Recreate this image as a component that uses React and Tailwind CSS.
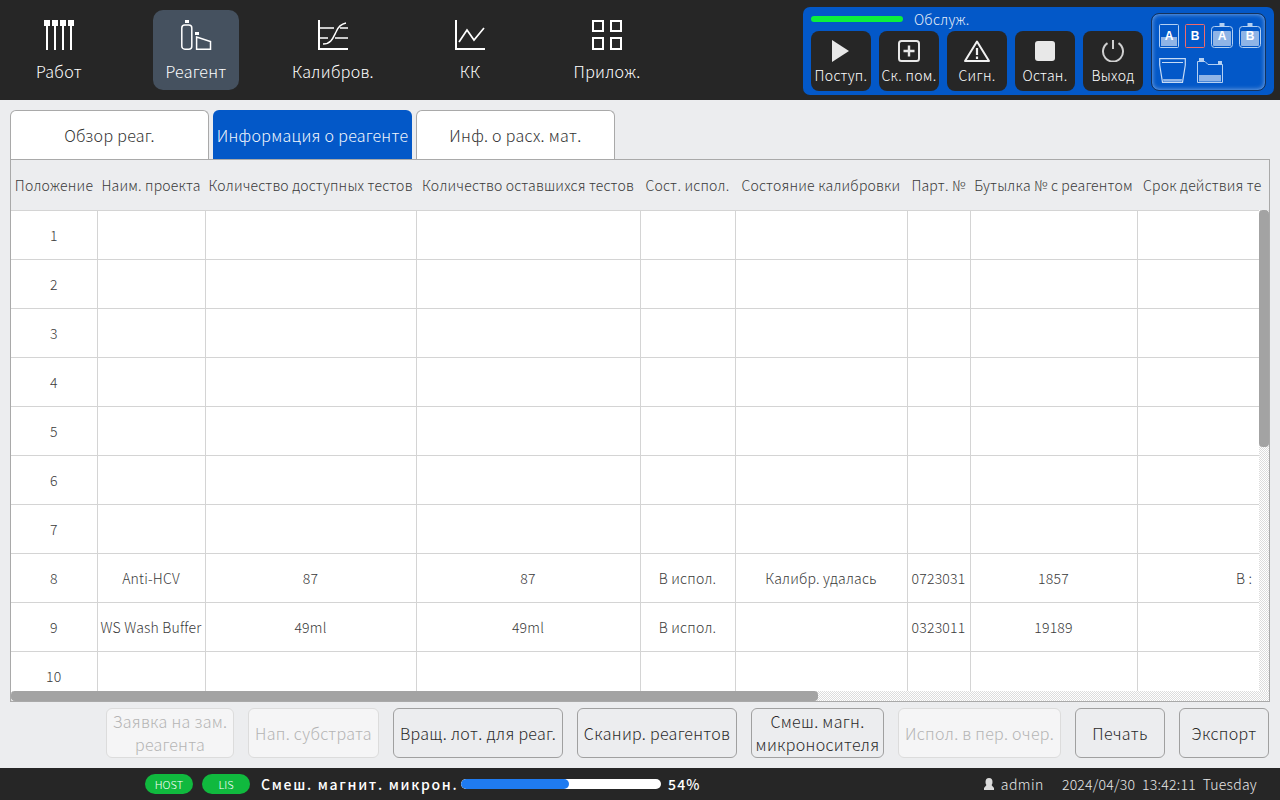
import React from "react";

const FONT = "font-['Noto_Sans_CJK_SC','Noto_Sans',sans-serif]";

const WorkIcon = () => (
  <svg width="30" height="30" viewBox="0 0 30 30" fill="#fff">
    {[0, 8, 16, 24].map((x) => (
      <g key={x}>
        <rect x={x} y="0" width="6" height="6" />
        <rect x={x + 2} y="6" width="2" height="24" />
      </g>
    ))}
  </svg>
);

const ReagentIcon = () => (
  <svg width="32" height="30" viewBox="0 0 32 30" fill="none" stroke="#fff" strokeWidth="1.5">
    <rect x="5" y="0" width="4" height="3" fill="#fff" stroke="none" />
    <rect x="1.8" y="5" width="10" height="24.2" rx="3" />
    <rect x="15" y="12" width="4" height="3" fill="#fff" stroke="none" />
    <path d="M16.6 17 L30.5 21.5 V29.2 H16.6 Z" />
  </svg>
);

const CalibIcon = () => (
  <svg width="30" height="30" viewBox="0 0 30 30" fill="none" stroke="#fff" strokeWidth="1.5">
    <path d="M1 0 V29 H30" strokeWidth="2" />
    <path d="M1 8 H16 M22 8 H30 M1 18 H10 M17 18 H30" />
    <path d="M5 24 C13 24 15 18 18 12 C20 7 23 4 28 3" />
  </svg>
);

const QcIcon = () => (
  <svg width="30" height="30" viewBox="0 0 30 30" fill="none" stroke="#fff">
    <path d="M1 0 V29 H30" strokeWidth="2" />
    <path d="M4 22 L12 10 L19 20 L29 8" strokeWidth="1.7" />
  </svg>
);

const AppsIcon = () => (
  <svg width="30" height="30" viewBox="0 0 30 30" fill="none" stroke="#fff" strokeWidth="2">
    <rect x="1" y="1" width="10" height="10" />
    <rect x="19" y="1" width="10" height="10" />
    <rect x="1" y="18" width="10" height="11" />
    <rect x="19" y="18" width="10" height="11" />
  </svg>
);

const navItems = [
  { label: "Работ", icon: <WorkIcon /> },
  { label: "Реагент", icon: <ReagentIcon />, active: true },
  { label: "Калибров.", icon: <CalibIcon /> },
  { label: "КК", icon: <QcIcon /> },
  { label: "Прилож.", icon: <AppsIcon /> },
];

const PlayIcon = () => (
  <svg width="18" height="22" viewBox="0 0 18 22" fill="#e8e8e8">
    <path d="M0 0 L17 11 L0 22 Z" />
  </svg>
);

const PlusIcon = () => (
  <svg width="22" height="22" viewBox="0 0 22 22" fill="none" stroke="#e8e8e8">
    <rect x="1" y="1" width="20" height="20" rx="2.5" strokeWidth="2" />
    <path d="M11 5.5 V16.5 M5.5 11 H16.5" strokeWidth="2.4" />
  </svg>
);

const AlarmIcon = () => (
  <svg width="26" height="22" viewBox="0 0 26 22" fill="none" stroke="#f2f2f2">
    <path d="M13 1.5 L25 21 H1 Z" strokeWidth="2" strokeLinejoin="round" />
    <path d="M13 8 V15 M13 16.5 V19" strokeWidth="2.2" />
  </svg>
);

const StopIcon = () => <div className="w-[20px] h-[20px] rounded-[3px] bg-[#e8e8e8]" />;

const PowerIcon = () => (
  <svg width="24" height="22" viewBox="0 0 24 22" fill="none" stroke="#d0d0d0" strokeWidth="2">
    <path d="M6.5 3.2 A10 10 0 1 0 17.5 3.2" />
    <path d="M12 0 V9" />
  </svg>
);

const controls = [
  { label: "Поступ.", icon: <PlayIcon /> },
  { label: "Ск. пом.", icon: <PlusIcon /> },
  { label: "Сигн.", icon: <AlarmIcon /> },
  { label: "Остан.", icon: <StopIcon /> },
  { label: "Выход", icon: <PowerIcon /> },
];

const CardIcon = ({ letter, border = "#b4d0f2", filled = true }) => (
  <svg width="20" height="24" viewBox="0 0 20 24" fill="none">
    <rect x="0.5" y="0.5" width="19" height="23" rx="1" stroke={border} />
    {filled && <rect x="2" y="13" width="16" height="9" fill="#8fb4e6" />}
    <text x="10" y="16" textAnchor="middle" fill="#fff" fontSize="12" fontWeight="700" fontFamily="'Liberation Sans', sans-serif">
      {letter}
    </text>
  </svg>
);

const BottleIcon = ({ letter }) => (
  <svg width="22" height="25" viewBox="0 0 22 25" fill="none">
    <rect x="8.5" y="0" width="5" height="4" fill="#b4d0f2" />
    <rect x="0.5" y="3.5" width="21" height="21" rx="3" stroke="#b4d0f2" />
    <rect x="2" y="8" width="18" height="15" rx="1" fill="#8fb4e6" />
    <text x="11" y="17" textAnchor="middle" fill="#fff" fontSize="12" fontWeight="700" fontFamily="'Liberation Sans', sans-serif">
      {letter}
    </text>
  </svg>
);

const WasteIcon = () => (
  <svg width="27" height="25" viewBox="0 0 27 25" fill="none">
    <path d="M0.7 0.7 H26.3 V7 L23.5 24.3 H3.5 L0.7 7 Z" stroke="#c6dbf5" strokeWidth="1.2" />
    <path d="M3 4.5 H24" stroke="#c6dbf5" />
    <path d="M4 21 H23 L22.6 23.5 H4.4 Z" fill="#8fb4e6" />
  </svg>
);

const TankIcon = () => (
  <svg width="26" height="25" viewBox="0 0 26 25" fill="none">
    <rect x="2" y="0" width="5" height="3" fill="#b4d0f2" />
    <rect x="21" y="3" width="4" height="3" fill="#b4d0f2" />
    <path d="M0.5 24.5 V3.5 H8 L11 6.5 H25.5 V24.5 Z" stroke="#b4d0f2" />
    <rect x="2" y="17" width="22" height="6.5" fill="#8fb4e6" />
  </svg>
);

const columns = [86, 108, 211, 224, 95, 172, 63, 167, 214];

const headers = [
  "Положение",
  "Наим. проекта",
  "Количество доступных тестов",
  "Количество оставшихся тестов",
  "Сост. испол.",
  "Состояние калибровки",
  "Парт. №",
  "Бутылка № с реагентом",
  "Срок действия те",
];

const rows = [
  ["1"],
  ["2"],
  ["3"],
  ["4"],
  ["5"],
  ["6"],
  ["7"],
  ["8", "Anti-HCV", "87", "87", "В испол.", "Калибр. удалась", "0723031", "1857", "В :"],
  ["9", "WS Wash Buffer", "49ml", "49ml", "В испол.", "", "0323011", "19189", ""],
  ["10"],
];

const buttons = [
  { label: "Заявка на зам. реагента", width: "w-[128px]", disabled: true },
  { label: "Нап. субстрата", width: "w-[131px]", disabled: true },
  { label: "Вращ. лот. для реаг.", width: "w-[170px]" },
  { label: "Сканир. реагентов", width: "w-[160px]" },
  { label: "Смеш. магн. микроносителя", width: "w-[133px]" },
  { label: "Испол. в пер. очер.", width: "w-[163px]", disabled: true },
  { label: "Печать", width: "w-[90px]" },
  { label: "Экспорт", width: "w-[90px]" },
];

const tabs = [
  { label: "Обзор реаг." },
  { label: "Информация о реагенте", active: true },
  { label: "Инф. о расх. мат." },
];

const App = () => {
  return (
    <div className={`${FONT} w-[1280px] h-[800px] flex flex-col overflow-hidden bg-[#ecedef]`}>
      <header className="h-[100px] shrink-0 bg-[#262626] flex justify-between pt-[7px] pr-[6px] pl-[16px]">
        <nav className="flex gap-[51px] pt-[3px]">
          {navItems.map((item) => (
            <div
              key={item.label}
              className={`w-[86px] h-[80px] rounded-[10px] flex flex-col items-center pt-[10px] ${item.active ? "bg-[#45515f]" : ""}`}
            >
              <div className="h-[30px] flex items-center justify-center">{item.icon}</div>
              <div className="mt-[10px] text-[16px] leading-[22px] tracking-[0.3px] font-light text-white whitespace-nowrap">
                {item.label}
              </div>
            </div>
          ))}
        </nav>

        <div className="w-[471px] h-[88px] rounded-[7px] bg-[#0358c8] flex pl-[8px] pr-[7px]">
          <div className="w-[332px]">
            <div className="h-[24px] flex items-center">
              <div className="w-[92px] h-[6px] rounded-full bg-[#0cf03c]" />
              <span className="ml-[11px] text-[14px] tracking-[0.2px] font-light text-[#e8eef8]">Обслуж.</span>
            </div>
            <div className="flex gap-[8px]">
              {controls.map((c) => (
                <div key={c.label} className="w-[60px] h-[60px] rounded-[8px] bg-[#262626] flex flex-col items-center">
                  <div className="h-[22px] mt-[9px] flex items-center justify-center">{c.icon}</div>
                  <div className="mt-[2px] text-[14px] leading-[22px] tracking-[0.3px] font-light text-white whitespace-nowrap">{c.label}</div>
                </div>
              ))}
            </div>
          </div>
          <div className="ml-[8px] mt-[6px] w-[115px] h-[78px] rounded-[8px] border border-[#14325c] shadow-[inset_0_0_5px_rgba(255,255,255,0.55)] pl-[7px] pt-[9px]">
            <div className="flex items-end h-[25px]">
              <CardIcon letter="A" />
              <div className="ml-[6px]">
                <CardIcon letter="B" border="#f26a6a" filled={false} />
              </div>
              <div className="ml-[6px]">
                <BottleIcon letter="A" />
              </div>
              <div className="ml-[6px]">
                <BottleIcon letter="B" />
              </div>
            </div>
            <div className="flex mt-[10px]">
              <WasteIcon />
              <div className="ml-[11px]">
                <TankIcon />
              </div>
            </div>
          </div>
        </div>
      </header>

      <main className="flex-1 flex flex-col min-h-0 px-[10px] pt-[10px]">
        <div className="flex gap-[4px] h-[49px] shrink-0">
          {tabs.map((t) => (
            <div
              key={t.label}
              className={
                t.active
                  ? "w-[199px] rounded-t-[6px] bg-[#0358c8] text-[#f2f6fc] flex items-center justify-center text-[16px] tracking-[0.3px] font-light whitespace-nowrap"
                  : "w-[199px] rounded-t-[6px] border border-b-0 border-[#a9a9a9] bg-white text-[#333] flex items-center justify-center text-[16px] tracking-[0.3px] font-light whitespace-nowrap"
              }
            >
              {t.label}
            </div>
          ))}
        </div>

        <div className="relative h-[543px] shrink-0 border border-[#a9a9a9] overflow-hidden">
          <table className="table-fixed border-collapse w-[1340px] text-[14px] tracking-[0.2px] font-light text-[#3a3a3a]">
            <colgroup>
              {columns.map((w, i) => (
                <col key={i} style={{ width: w }} />
              ))}
            </colgroup>
            <thead>
              <tr className="h-[50px] bg-[#ecedef]">
                {headers.map((h, i) => (
                  <th
                    key={h}
                    className={
                      i === 8
                        ? "font-light whitespace-nowrap text-left border-b border-[#d4d4d4] pl-[6px] pr-0 pt-[2px]"
                        : "font-light whitespace-nowrap overflow-hidden text-center border-b border-[#d4d4d4] px-0 pt-[2px]"
                    }
                  >
                    {h}
                  </th>
                ))}
              </tr>
            </thead>
            <tbody>
              {rows.map((row) => (
                <tr key={row[0]} className="h-[49px] bg-white">
                  {columns.map((_, i) => (
                    <td key={i} className="text-center whitespace-nowrap overflow-hidden border-r border-b border-[#d4d4d4] p-0 pt-[2px]">
                      {row[i] || ""}
                    </td>
                  ))}
                </tr>
              ))}
            </tbody>
          </table>

          <div className="absolute top-[50px] right-0 bottom-0 w-[10px] bg-[repeating-conic-gradient(#dcdcdc_0_25%,#ffffff_0_50%)] bg-[length:2px_2px]">
            <div className="h-[237px] rounded-[4px] bg-[#a3a3a3]" />
          </div>
          <div className="absolute left-0 right-0 bottom-0 h-[10px] bg-[repeating-conic-gradient(#dcdcdc_0_25%,#ffffff_0_50%)] bg-[length:2px_2px]">
            <div className="w-[807px] h-[10px] rounded-[4px] bg-[#a3a3a3]" />
          </div>
        </div>

        <div className="flex justify-end gap-[14px] pt-[6px] pr-[1px]">
          {buttons.map((b) => (
            <div
              key={b.label}
              className={
                b.disabled
                  ? `${b.width} h-[50px] rounded-[6px] border border-[#dcdcdc] bg-[#f5f5f6] text-[#b4b4b4] flex items-center justify-center text-center text-[16px] leading-[23px] tracking-[0.3px] font-light`
                  : `${b.width} h-[50px] rounded-[6px] border border-[#a0a0a0] bg-[#ecedef] text-[#2a2a2a] flex items-center justify-center text-center text-[16px] leading-[23px] tracking-[0.3px] font-light`
              }
            >
              {b.label}
            </div>
          ))}
        </div>
      </main>

      <footer className="h-[32px] shrink-0 bg-[#262626] flex items-center pl-[145px] text-white">
        <div className="w-[48px] h-[20px] rounded-full bg-[#10b93e] flex items-center justify-center text-[11px] font-light">HOST</div>
        <div className="ml-[9px] w-[48px] h-[20px] rounded-full bg-[#10b93e] flex items-center justify-center text-[11px] font-light">LIS</div>
        <div className="ml-[11px] w-[200px] text-[14px] font-medium tracking-[1.7px] whitespace-nowrap">Смеш. магнит. микрон.</div>
        <div className="w-[200px] h-[10px] rounded-full bg-white overflow-hidden">
          <div className="h-full rounded-full bg-[#1f7bf0]" style={{ width: "54%" }} />
        </div>
        <div className="ml-[7px] text-[14px] font-medium tracking-[1.2px]">54%</div>
        <svg className="ml-[282px]" width="12" height="13" viewBox="0 0 12 13" fill="#dcdcdc">
          <ellipse cx="6" cy="4" rx="3.5" ry="4" />
          <path d="M3.5 7 L1 10 V12 H11 V10 L8.5 7 Z" />
        </svg>
        <div className="ml-[6px] text-[14px] font-light tracking-[0.5px] text-[#e8e8e8]">admin</div>
        <div className="ml-[18px] text-[14px] font-light tracking-[0.25px] text-[#e8e8e8] whitespace-nowrap">2024/04/30&nbsp;&nbsp;13:42:11&nbsp;&nbsp;Tuesday</div>
      </footer>
    </div>
  );
};

export default App;
